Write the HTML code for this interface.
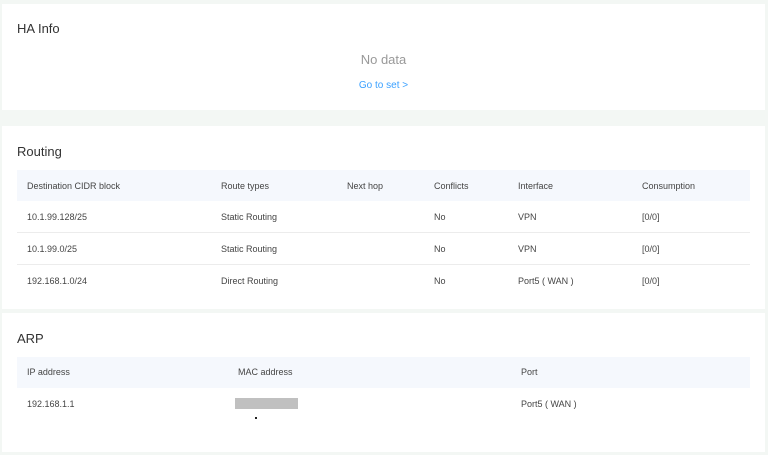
<!DOCTYPE html><html><head><style>
body{margin:0;width:768px;height:455px;background:#f3f7f4;font-family:"Liberation Sans",sans-serif;position:relative;overflow:hidden}
.card{position:absolute;left:2px;width:763px;background:#fff}
.t{position:absolute;left:15px;font-size:13px;color:#333}
.tb{position:absolute;left:15px;width:733px}
.r{position:absolute;left:0;width:733px;font-size:9px;color:#444}
.r span{position:absolute}
.h{background:#f5f8fd}
.b{border-bottom:1px solid #ececec}
</style></head><body>
<div class="card" style="top:4px;height:106px">
<div class="t" style="top:17px">HA Info</div>
<div style="position:absolute;left:0;width:763px;top:48px;text-align:center;font-size:13px;color:#999">No data</div>
<div style="position:absolute;left:0;width:763px;top:76px;text-align:center;font-size:10px;color:#3aa0ff">Go to set &gt;</div>
</div>
<div class="card" style="top:126px;height:183px">
<div class="t" style="top:18px">Routing</div>
<div class="tb" style="top:44px">
<div class="r h" style="top:0;height:31px"><span style="left:10px;top:11px">Destination CIDR block</span><span style="left:204px;top:11px">Route types</span><span style="left:330px;top:11px">Next hop</span><span style="left:417px;top:11px">Conflicts</span><span style="left:501px;top:11px">Interface</span><span style="left:625px;top:11px">Consumption</span></div>
<div class="r b" style="top:31px;height:31px"><span style="left:10px;top:11px">10.1.99.128/25</span><span style="left:204px;top:11px">Static Routing</span><span style="left:417px;top:11px">No</span><span style="left:501px;top:11px">VPN</span><span style="left:625px;top:11px">[0/0]</span></div>
<div class="r b" style="top:63px;height:31px"><span style="left:10px;top:11px">10.1.99.0/25</span><span style="left:204px;top:11px">Static Routing</span><span style="left:417px;top:11px">No</span><span style="left:501px;top:11px">VPN</span><span style="left:625px;top:11px">[0/0]</span></div>
<div class="r" style="top:95px;height:31px"><span style="left:10px;top:11px">192.168.1.0/24</span><span style="left:204px;top:11px">Direct Routing</span><span style="left:417px;top:11px">No</span><span style="left:501px;top:11px">Port5 ( WAN )</span><span style="left:625px;top:11px">[0/0]</span></div>
</div></div>
<div class="card" style="top:313px;height:139px">
<div class="t" style="top:18px">ARP</div>
<div class="tb" style="top:44px">
<div class="r h" style="top:0;height:31px"><span style="left:10px;top:10px">IP address</span><span style="left:221px;top:10px">MAC address</span><span style="left:504px;top:10px">Port</span></div>
<div class="r" style="top:31px;height:31px"><span style="left:10px;top:11px">192.168.1.1</span><span style="left:218px;top:10px;width:63px;height:11px;background:#c0c0c0"></span><span style="left:238px;top:29px;width:2px;height:2px;background:#222"></span><span style="left:504px;top:11px">Port5 ( WAN )</span></div>
</div></div>
</body></html>
